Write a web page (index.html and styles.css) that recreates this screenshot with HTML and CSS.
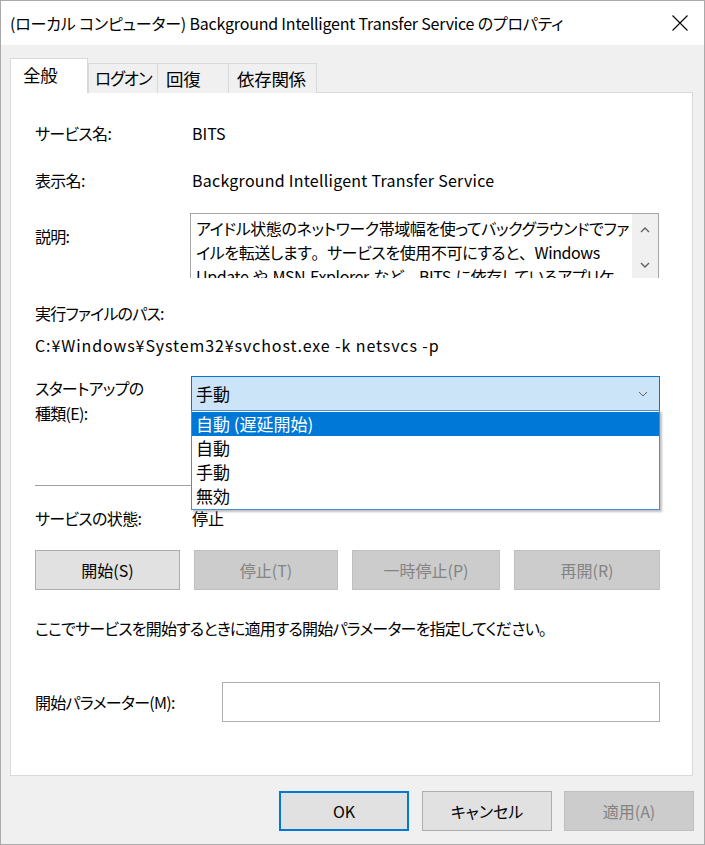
FILE: index.html
```html
<!DOCTYPE html>
<html lang="ja">
<head>
    <meta charset="UTF-8">
    <title>BITS のプロパティ</title>
    <link rel="stylesheet" href="styles.css">
</head>
<body>
    <div class="window">
        <div class="titlebar">
            <span class="title">(ローカル コンピューター) Background Intelligent Transfer Service のプロパティ</span>
            <svg class="close" width="16" height="16" viewBox="0 0 16 16">
                <path d="M0.5 0.5 L15.5 15.5 M15.5 0.5 L0.5 15.5" stroke="#000" stroke-width="1.1" fill="none"/>
            </svg>
        </div>

        <div class="dialog-body">
            <div class="tabs">
                <div class="tab tab-active">全般</div>
                <div class="tab tab-logon">ログオン</div>
                <div class="tab tab-recovery">回復</div>
                <div class="tab tab-deps">依存関係</div>
            </div>

            <div class="panel">
                <div class="field">
                    <span class="label">サービス名:</span>
                    <span class="value">BITS</span>
                </div>
                <div class="field field-display">
                    <span class="label">表示名:</span>
                    <span class="value">Background Intelligent Transfer Service</span>
                </div>
                <div class="field field-desc">
                    <span class="label label-desc">説明:</span>
                    <div class="desc-box">
                        <div class="desc-text">
                            <div>アイドル状態のネットワーク帯域幅を使ってバックグラウンドでファ</div>
                            <div>イルを転送します<span class="punct">。</span>サービスを使用不可にすると<span class="punct">、</span>Windows</div>
                            <div>Update や MSN Explorer など<span class="punct">、</span>BITS に依存しているアプリケ</div>
                        </div>
                        <div class="scrollbar">
                            <svg width="10" height="6" viewBox="0 0 10 6"><path d="M1 5 L5 1 L9 5" stroke="#606060" stroke-width="1.4" fill="none"/></svg>
                            <svg width="10" height="6" viewBox="0 0 10 6"><path d="M1 1 L5 5 L9 1" stroke="#606060" stroke-width="1.4" fill="none"/></svg>
                        </div>
                    </div>
                </div>

                <div class="path-label">実行ファイルのパス:</div>
                <div class="path-value">C:¥Windows¥System32¥svchost.exe -k netsvcs -p</div>

                <div class="field field-startup">
                    <span class="label label-startup">スタートアップの<br>種類(E):</span>
                    <div class="combo-wrap">
                        <div class="combo">
                            <span>手動</span>
                            <svg width="10" height="6" viewBox="0 0 10 6"><path d="M1 1 L5 5 L9 1" stroke="#606060" stroke-width="1" fill="none"/></svg>
                        </div>
                        <ul class="dropdown">
                            <li class="selected">自動 (遅延開始)</li>
                            <li>自動</li>
                            <li>手動</li>
                            <li>無効</li>
                        </ul>
                    </div>
                </div>

                <div class="separator"></div>

                <div class="field field-status">
                    <span class="label">サービスの状態:</span>
                    <span class="value">停止</span>
                </div>

                <div class="service-buttons">
                    <button class="btn btn-start">開始(S)</button>
                    <button class="btn btn-stop" disabled>停止(T)</button>
                    <button class="btn btn-pause" disabled>一時停止(P)</button>
                    <button class="btn btn-resume" disabled>再開(R)</button>
                </div>

                <p class="hint">ここでサービスを開始するときに適用する開始パラメーターを指定してください<span class="punct">。</span></p>

                <div class="field field-param">
                    <label class="label label-param" for="param">開始パラメーター(M):</label>
                    <input type="text" id="param" class="param-input">
                </div>
            </div>

            <div class="footer">
                <button class="btn btn-footer btn-ok">OK</button>
                <button class="btn btn-footer">キャンセル</button>
                <button class="btn btn-footer" disabled>適用(A)</button>
            </div>
        </div>
    </div>
</body>
</html>
```

FILE: styles.css
```css
* {
    box-sizing: border-box;
}
body {
    margin: 0;
    font-family: "Noto Sans CJK JP", sans-serif;
    font-feature-settings: "palt";
    font-size: 16px;
    color: #000;
    background-color: #f0f0f0;
}
.window {
    width: 705px;
    height: 845px;
    border: 1px solid #aaaaaa;
    background-color: #f0f0f0;
    display: flex;
    flex-direction: column;
}
.titlebar {
    height: 44px;
    background-color: #ffffff;
    display: flex;
    align-items: center;
    justify-content: space-between;
    padding: 0 16px 0 9px;
}
.title {
    font-size: 16px;
    white-space: nowrap;
    letter-spacing: -0.2px;
}
.close {
    display: block;
}
.dialog-body {
    padding: 13px 10px 0 9px;
}
.tabs {
    display: flex;
    align-items: flex-end;
    height: 35px;
    position: relative;
    z-index: 1;
    margin-bottom: -1px;
}
.tab {
    height: 30px;
    border: 1px solid #d9d9d9;
    border-bottom: none;
    background-color: #f0f0f0;
    display: flex;
    align-items: center;
    margin-left: -1px;
    padding: 0 0 1px 8px;
    font-size: 17.5px;
    letter-spacing: -0.3px;
    white-space: nowrap;
}
.tab-active {
    height: 35px;
    width: 78px;
    margin-left: 0;
    background-color: #ffffff;
    padding: 0 0 4px 12px;
}
.tab-logon {
    width: 70px;
    margin-left: 0;
    padding-left: 6px;
    font-size: 16.5px;
    letter-spacing: -1.1px;
}
.tab-recovery {
    width: 72px;
}
.tab-deps {
    width: 89px;
}
.panel {
    width: 683px;
    background-color: #ffffff;
    border: 1px solid #d9d9d9;
    padding: 28px 32px 53px 24px;
}
.field {
    display: flex;
    line-height: 24px;
}
.label {
    width: 157px;
    flex-shrink: 0;
    letter-spacing: -0.7px;
    white-space: nowrap;
}
.value {
    white-space: nowrap;
}
.field-display .value {
    letter-spacing: 0.25px;
}
.punct {
    font-feature-settings: normal;
}
.field-display {
    margin-top: 23px;
}
.field-desc {
    margin-top: 21px;
    align-items: flex-start;
}
.label-desc {
    padding-top: 11px;
}
.desc-box {
    flex: 1;
    height: 65px;
    margin-left: -2px;
    margin-right: 1px;
    border: 1px solid #a6a6a6;
    border-bottom: none;
    display: flex;
    overflow: hidden;
}
.desc-text {
    flex: 1;
    padding: 2px 0 0 5px;
    white-space: nowrap;
    overflow: hidden;
    letter-spacing: -0.4px;
    word-spacing: 1.5px;
}
.scrollbar {
    width: 26px;
    flex-shrink: 0;
    background-color: #f0f0f0;
    display: flex;
    flex-direction: column;
    align-items: center;
    padding-top: 13px;
    gap: 29px;
}
.scrollbar svg {
    display: block;
}
.path-label {
    margin-top: 23px;
    line-height: 24px;
    letter-spacing: -0.8px;
}
.path-value {
    margin-top: 8px;
    line-height: 24px;
    white-space: nowrap;
    letter-spacing: 0.9px;
}
.field-startup {
    margin-top: 19px;
    align-items: flex-start;
}
.label-startup {
    line-height: 25px;
}
.combo-wrap {
    flex: 1;
    margin-left: -1px;
    position: relative;
}
.combo {
    height: 35px;
    background-color: #cce4f7;
    border: 1px solid #0078d7;
    display: flex;
    align-items: center;
    justify-content: space-between;
    padding: 0 11px 0 4px;
    font-size: 17px;
}
.dropdown {
    position: absolute;
    top: 34px;
    left: 0;
    right: 0;
    margin: 0;
    padding: 1px 0;
    list-style: none;
    background-color: #ffffff;
    border: 1px solid #4a8fd3;
    box-shadow: 2px 2px 2px rgba(0, 0, 0, 0.25);
    z-index: 5;
    font-size: 17px;
}
.dropdown li {
    height: 24px;
    line-height: 24px;
    padding-left: 4px;
}
.dropdown li.selected {
    background-color: #0078d7;
    color: #ffffff;
}
.separator {
    margin-top: 59px;
    height: 1px;
    background-color: #a0a0a0;
}
.field-status {
    margin-top: 20px;
}
.service-buttons {
    margin-top: 20px;
    display: flex;
    justify-content: space-between;
}
.btn {
    height: 40px;
    font-family: inherit;
    font-feature-settings: "palt";
    font-size: 16px;
    color: #000;
    background-color: #e1e1e1;
    border: 1px solid #adadad;
    padding: 0;
}
.btn:disabled {
    background-color: #cccccc;
    border-color: #bfbfbf;
    color: #838383;
}
.btn-start {
    width: 145px;
}
.btn-stop {
    width: 144px;
}
.btn-pause {
    width: 148px;
}
.btn-resume {
    width: 146px;
}
.hint {
    margin: 26px 0 0;
    line-height: 24px;
    white-space: nowrap;
    letter-spacing: -0.8px;
}
.field-param {
    margin-top: 42px;
    align-items: center;
}
.label-param {
    width: 187px;
}
.param-input {
    flex: 1;
    height: 40px;
    border: 1px solid #adadad;
    background-color: #ffffff;
    font-family: inherit;
    font-size: 16px;
}
.footer {
    margin-top: 15px;
    display: flex;
    justify-content: flex-end;
    gap: 12px;
}
.btn-footer {
    width: 130px;
}
.btn-ok {
    border: 2px solid #0078d7;
    margin-right: 1px;
}
```
